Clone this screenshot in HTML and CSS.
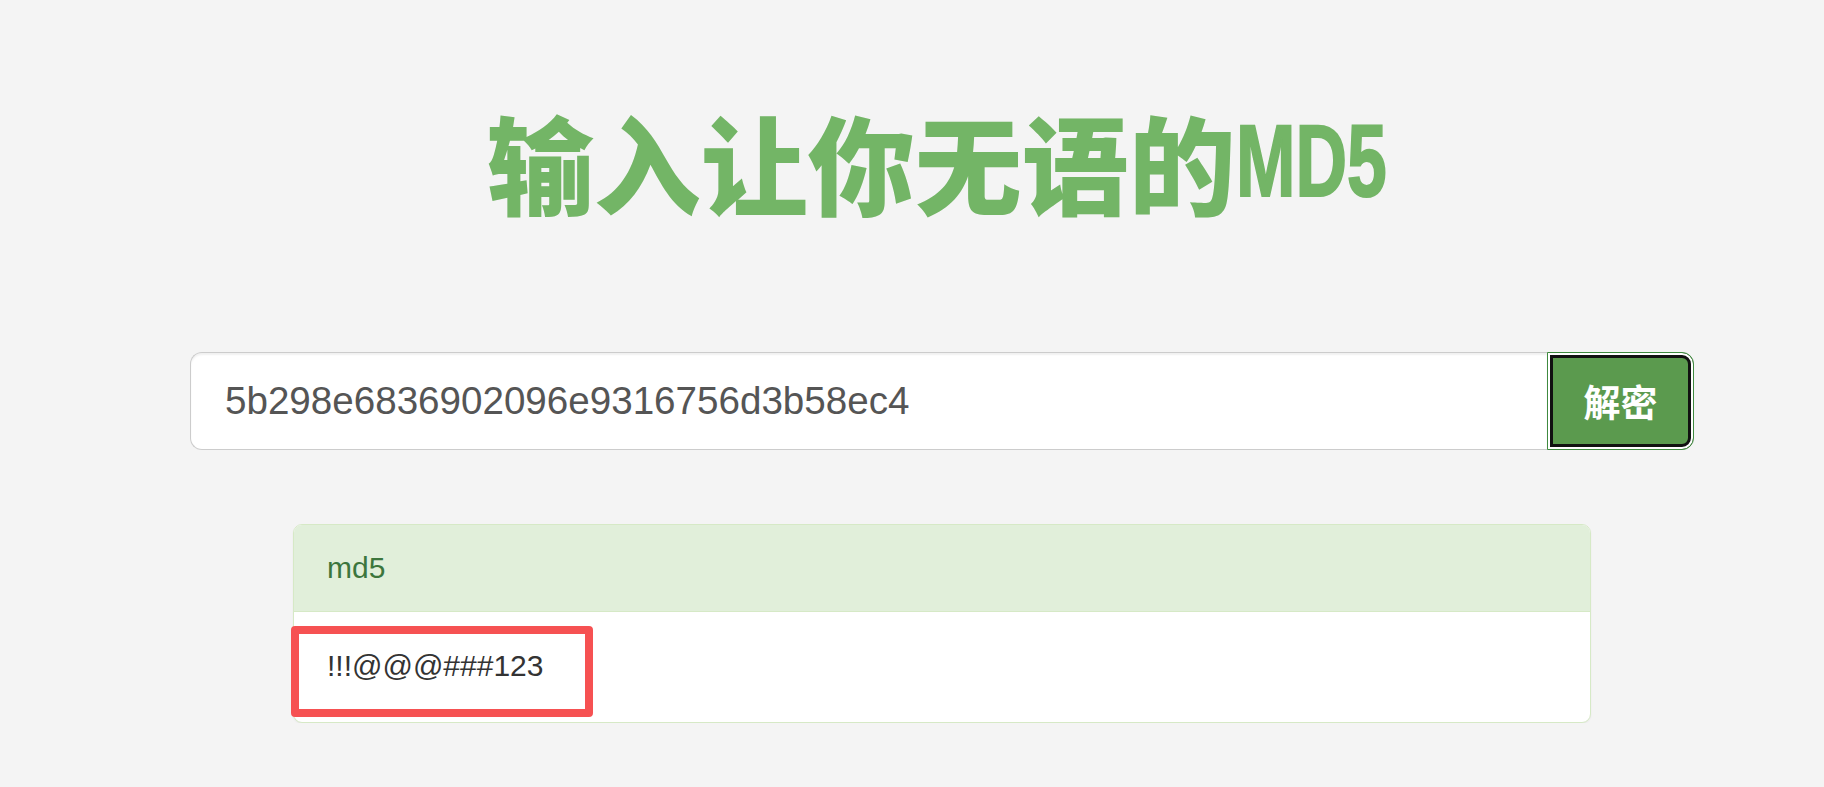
FILE: index.html
```html
<!DOCTYPE html>
<html lang="zh-CN">
<head>
    <meta charset="UTF-8">
    <title>输入让你无语的MD5</title>
    <link rel="stylesheet" href="styles.css">
</head>
<body>
    <main class="page">
        <h1 class="title">输入让你无语的<span class="title-latin">MD5</span></h1>
        <form class="search" onsubmit="return false">
            <input class="search-input" type="text" value="5b298e6836902096e9316756d3b58ec4">
            <button class="search-btn" type="submit">解密</button>
        </form>
        <section class="panel">
            <div class="panel-heading">md5</div>
            <div class="panel-body">
                !!!@@@###123
                <span class="mark"></span>
            </div>
        </section>
    </main>
</body>
</html>
```

FILE: styles.css
```css
body {
    margin: 0;
    background: #f4f4f4;
    font-family: 'Liberation Sans', Arial, sans-serif;
    color: #333;
}
.page {
    width: 1504px;
    margin-left: 190px;
    display: flex;
    flex-direction: column;
}
.title {
    margin: 97px 0 0;
    padding-right: 10px;
    height: 128px;
    text-align: center;
    color: #73b566;
    font-family: 'Noto Sans CJK SC', sans-serif;
    font-weight: 900;
    font-size: 107px;
    line-height: 128px;
    white-space: nowrap;
}
.title-latin {
    display: inline-block;
    vertical-align: 11px;
    font-family: 'Liberation Sans', Arial, sans-serif;
    font-weight: bold;
    font-size: 102px;
    -webkit-text-stroke: 2px #73b566;
    transform: scaleX(0.7);
    transform-origin: left center;
    margin-right: -64px;
}
.search {
    display: flex;
    margin-top: 127px;
    height: 98px;
}
.search-input {
    flex: 1;
    box-sizing: border-box;
    height: 98px;
    margin: 0;
    padding: 0 34px;
    border: 1px solid #ccc;
    border-right: none;
    border-radius: 12px 0 0 12px;
    background: #fff;
    color: #555;
    font-family: 'Liberation Sans', Arial, sans-serif;
    font-size: 38.6px;
    box-shadow: inset 0 2px 2px rgba(0, 0, 0, 0.06);
    outline: none;
}
.search-btn {
    width: 147px;
    height: 98px;
    margin: 0;
    border: 1px solid #3f8a3f;
    border-radius: 0 12px 12px 0;
    background: #5b9a4e;
    color: #fff;
    font-family: 'Noto Sans CJK SC', sans-serif;
    font-weight: bold;
    font-size: 37px;
    box-shadow: inset 0 0 0 2px #fff, inset 0 0 0 5px #111;
    cursor: pointer;
}
.panel {
    width: 1296px;
    margin: 74px 0 0 103px;
    border: 1px solid #d6e9c6;
    border-radius: 9px;
    background: #fff;
    box-shadow: 0 1px 2px rgba(0, 0, 0, 0.05);
}
.panel-heading {
    height: 87px;
    box-sizing: border-box;
    padding: 21px 33px;
    background: #e1efda;
    border-bottom: 1px solid #d6e9c6;
    border-radius: 8px 8px 0 0;
    color: #3c763d;
    font-size: 30px;
    line-height: 43px;
}
.panel-body {
    position: relative;
    height: 110px;
    box-sizing: border-box;
    padding: 32px 33px;
    font-size: 30px;
    line-height: 43px;
}
.mark {
    position: absolute;
    left: -3px;
    top: 14px;
    width: 302px;
    height: 91px;
    box-sizing: border-box;
    border: 8px solid #f65152;
    border-radius: 4px;
}
```
